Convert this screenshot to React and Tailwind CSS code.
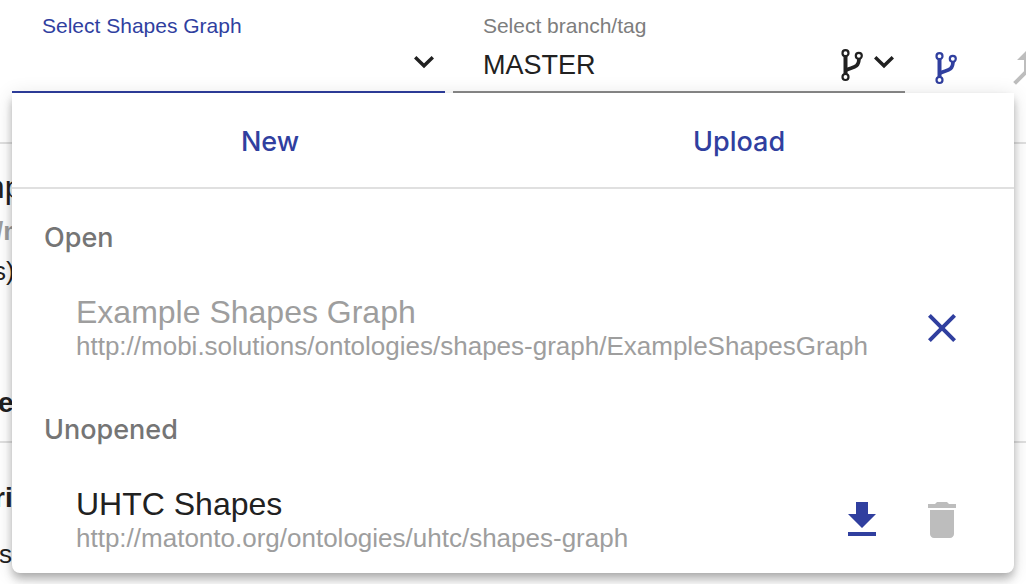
import { MdCallMerge, MdClose, MdDelete } from "react-icons/md";

function ForkIcon({ className }) {
  return (
    <svg viewBox="0 0 22 33" className={className} fill="none" stroke="currentColor" aria-hidden="true">
      <g strokeWidth="2.2">
        <circle cx="4.5" cy="4.2" r="3" />
        <circle cx="4.5" cy="28" r="3" />
        <circle cx="17.8" cy="6.8" r="3" />
      </g>
      <path d="M4.5 7.2V25" strokeWidth="4" />
      <path d="M18 9.5C18 19.5 11 18 5 21.2" strokeWidth="3.6" />
    </svg>
  );
}

function Chevron() {
  return (
    <svg viewBox="0 0 22 14" className="h-[14px] w-[22px] shrink-0" fill="none" stroke="currentColor" strokeWidth="3.4" aria-hidden="true">
      <path d="M2.2 2.2L11 10.8L19.8 2.2" />
    </svg>
  );
}

function DownloadIcon() {
  return (
    <svg viewBox="0 0 28 36" className="h-9 w-7" fill="currentColor" aria-hidden="true">
      <path d="M8 0H20V12H28L14 26L0 12H8ZM0 30H28V34H0Z" />
    </svg>
  );
}

function GroupLabel({ children }) {
  return (
    <h2 className="flex h-24 items-center px-8 pt-[2px] font-[Inter] text-[27px] font-medium text-[#757575]">
      {children}
    </h2>
  );
}

function GraphItem({ title, url, disabled, children }) {
  return (
    <div className="flex h-24 items-center pr-12 pb-[10px] pl-16">
      <div className="min-w-0 flex-1 whitespace-nowrap">
        <p className={disabled ? "text-[32px] leading-9 text-[#9e9e9e]" : "text-[32px] leading-9 text-[#212121]"}>
          {title}
        </p>
        <p className="text-[26px] leading-8 text-[#9e9e9e]">{url}</p>
      </div>
      <div className="flex shrink-0 items-center gap-8 text-[#303f9f]">{children}</div>
    </div>
  );
}

const iconButton = "flex size-12 items-center justify-center";

export default function App() {
  return (
    <div className="relative min-h-screen overflow-hidden bg-white font-['Liberation_Sans',Arial,sans-serif] text-[#212121]">
      <header className="flex h-36 items-start border-b-2 border-[#e0e0e0] pl-3">
        <div className="flex min-w-0 flex-1 gap-2">
          <div className="flex h-[93px] min-w-0 flex-[432] flex-col border-b-2 border-[#303f9f] pt-3 pr-2 pl-[30px]">
            <label htmlFor="graph" className="text-[21px] leading-7 text-[#303f9f]">
              Select Shapes Graph
            </label>
            <div className="flex h-[52px] items-center">
              <input id="graph" type="text" className="min-w-0 flex-1 bg-transparent text-[27px] outline-none" />
              <button type="button" aria-label="Toggle list" className="mb-2 flex pr-[2px]">
                <Chevron />
              </button>
            </div>
          </div>
          <div className="flex h-[93px] min-w-0 flex-[453] flex-col border-b-2 border-[#8c8c8c] pt-3 pr-2 pl-[30px]">
            <label htmlFor="branch" className="text-[21px] leading-7 text-[#7d7d7d]">
              Select branch/tag
            </label>
            <div className="flex h-[52px] items-center">
              <select id="branch" className="min-w-0 flex-1 appearance-none bg-transparent text-[27px] outline-none">
                <option>MASTER</option>
              </select>
              <ForkIcon className="mr-[10px] h-[33px] w-[22px] shrink-0" />
              <span className="mb-2 flex pr-[2px]">
                <Chevron />
              </span>
            </div>
          </div>
        </div>
        <button type="button" aria-label="Create branch" className="mt-[52px] ml-[30px] shrink-0 text-[#303f9f]">
          <ForkIcon className="h-[33px] w-[22px]" />
        </button>
        <button type="button" aria-label="Merge" className="mt-11 -mr-6 ml-[45px] shrink-0 text-[#bdbdbd]">
          <MdCallMerge className="size-12" />
        </button>
      </header>

      <main className="whitespace-nowrap">
        <section className="h-[299px] border-b-2 border-[#e0e0e0] pt-[23px]">
          <h1 className="-ml-[22px] text-[32px] leading-10">mp</h1>
          <p className="-ml-1 text-[26px] leading-12 font-bold text-[#9e9e9e]">/m</p>
          <p className="-ml-[7px] text-[26px] leading-8">s)</p>
          <h2 className="-ml-[2px] pt-24 text-[28px] leading-10 font-bold">e</h2>
        </section>
        <section className="pt-[35px]">
          <h3 className="-ml-[6px] text-[28px] leading-10 font-bold">ri</h3>
          <p className="-ml-[1px] pt-5 text-[26px] leading-8">s</p>
        </section>
      </main>

      <div className="absolute inset-x-3 top-[93px] rounded-b-lg bg-white shadow-[0_4px_8px_-2px_rgba(0,0,0,0.2),0_8px_10px_0_rgba(0,0,0,0.14),0_2px_20px_0_rgba(0,0,0,0.12)]">
        <div className="flex h-24 gap-16 border-b-2 border-[#e0e0e0] px-16 font-[Inter] text-[27px] font-medium text-[#303f9f]">
          <button type="button" className="flex-auto pt-1">New</button>
          <button type="button" className="flex-auto pt-1">Upload</button>
        </div>
        <GroupLabel>Open</GroupLabel>
        <GraphItem disabled title="Example Shapes Graph" url="http://mobi.solutions/ontologies/shapes-graph/ExampleShapesGraph">
          <button type="button" aria-label="Close" className={iconButton}>
            <MdClose className="size-12" />
          </button>
        </GraphItem>
        <GroupLabel>Unopened</GroupLabel>
        <GraphItem title="UHTC Shapes" url="http://matonto.org/ontologies/uhtc/shapes-graph">
          <button type="button" aria-label="Download" className={iconButton}>
            <DownloadIcon />
          </button>
          <button type="button" aria-label="Delete" disabled className={iconButton + " text-[#bdbdbd]"}>
            <MdDelete className="size-12" />
          </button>
        </GraphItem>
      </div>
    </div>
  );
}
